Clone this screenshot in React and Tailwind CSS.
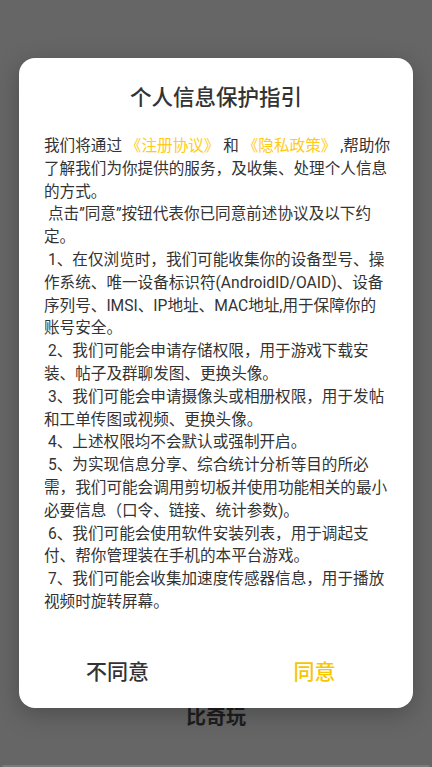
import React from "react";

const Y = ({ children }) => <span className="text-[#FFCB14]">{children}</span>;

const lines = [
  [false, <>我们将通过 <Y>《注册协议》</Y> 和 <Y>《隐私政策》</Y> ,帮助你</>],
  [false, "了解我们为你提供的服务，及收集、处理个人信息"],
  [false, "的方式。"],
  [true, "点击”同意”按钮代表你已同意前述协议及以下约"],
  [false, "定。"],
  [true, "1、在仅浏览时，我们可能收集你的设备型号、操"],
  [false, "作系统、唯一设备标识符(AndroidID/OAID)、设备"],
  [false, "序列号、IMSI、IP地址、MAC地址,用于保障你的"],
  [false, "账号安全。"],
  [true, "2、我们可能会申请存储权限，用于游戏下载安"],
  [false, "装、帖子及群聊发图、更换头像。"],
  [true, "3、我们可能会申请摄像头或相册权限，用于发帖"],
  [false, "和工单传图或视频、更换头像。"],
  [true, "4、上述权限均不会默认或强制开启。"],
  [true, "5、为实现信息分享、综合统计分析等目的所必"],
  [false, "需，我们可能会调用剪切板并使用功能相关的最小"],
  [false, "必要信息（口令、链接、统计参数)。"],
  [true, "6、我们可能会使用软件安装列表，用于调起支"],
  [false, "付、帮你管理装在手机的本平台游戏。"],
  [true, "7、我们可能会收集加速度传感器信息，用于播放"],
  [false, "视频时旋转屏幕。"],
];

export default function App() {
  return (
    <div
      className="relative h-[767px] w-[432px] overflow-hidden bg-[#666666]"
      style={{ fontFamily: 'Roboto, "Noto Sans CJK SC", sans-serif' }}
    >
      <div className="absolute left-0 right-0 top-[704px] flex justify-center text-[20px] font-bold leading-[26px] text-[#1e1e1e]">
        比奇玩
      </div>
      <div className="absolute bottom-0 left-[2px] right-[2px] h-[2px] rounded-b bg-[#7a7a7a]" />
      <div className="relative mx-[19px] mt-[58px] flex h-[650px] flex-col rounded-[16px] bg-white shadow-[0_6px_24px_rgba(0,0,0,0.25)]">
        <div className="pt-[26px] text-center text-[21.5px] font-medium leading-[28px] text-[#333333]">
          个人信息保护指引
        </div>
        <div className="mt-[23px] pl-[25px] text-[15.6px] leading-[22.8px] text-[#333333]">
          {lines.map(([indent, t], i) => (
            <div key={i} className={indent ? "whitespace-nowrap pl-[4px]" : "whitespace-nowrap"}>
              {t}
            </div>
          ))}
        </div>
        <div className="mt-auto mb-[6px] flex h-[58px]">
          <div className="flex flex-1 items-center justify-center text-[21px] font-medium text-[#333333]">不同意</div>
          <div className="flex flex-1 items-center justify-center text-[21px] font-medium text-[#F7C600]">同意</div>
        </div>
      </div>
    </div>
  );
}
